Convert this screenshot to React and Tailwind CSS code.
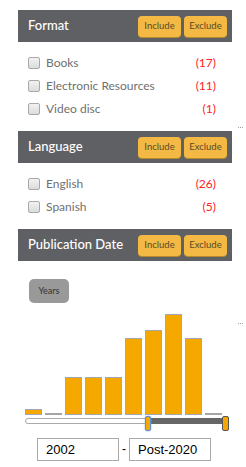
import { useState } from 'react';

const FONT = { fontFamily: 'Lato, "Open Sans", sans-serif' };

const FORMATS = [
  { label: 'Books', count: 17 },
  { label: 'Electronic Resources', count: 11 },
  { label: 'Video disc', count: 1 },
];

const LANGUAGES = [
  { label: 'English', count: 26 },
  { label: 'Spanish', count: 5 },
];

// bar heights in px, one per year bucket
const BARS = [6, 1, 38, 38, 38, 77, 85, 101, 77, 1];

const Dots = () => (
  <div className="flex gap-[1px] pl-[6px]">
    <span className="w-[1px] h-[1px] bg-gray-400" />
    <span className="w-[1px] h-[1px] bg-gray-400" />
    <span className="w-[1px] h-[1px] bg-gray-400" />
  </div>
);

const FacetHeader = ({ title }) => (
  <div className="h-8 bg-[#5f6064] flex items-center justify-between pl-[10px] pr-[5px]">
    <h3 className="text-white text-[13px] font-medium">{title}</h3>
    <div className="flex gap-[3px]">
      {['Include', 'Exclude'].map(b => (
        <button key={b}
          className="h-[21px] w-[43px] rounded-[4px] bg-[#f3b944] text-[9.5px] text-[#5a4a26] shadow-[0_1px_0_#b48a2c]">
          {b}
        </button>
      ))}
    </div>
  </div>
);

const FacetList = ({ items }) => (
  <ul className="pt-[9px] pb-[11px] pl-[10px] pr-4">
    {items.map(it => (
      <li key={it.label} className="h-[23px] flex items-center">
        <span className="w-3 h-3 rounded-[2px] border border-[#a9a9a9] bg-gradient-to-b from-[#f2f2f2] to-[#dcdcdc] shrink-0" />
        <span className="ml-[6px] text-[12px] text-[#707070]">{it.label}</span>
        <span className="ml-auto text-[12px] text-[#f22]">({it.count})</span>
      </li>
    ))}
  </ul>
);

export default function App() {
  const [from, setFrom] = useState('2002');
  const [to, setTo] = useState('Post-2020');

  return (
    <div className="bg-white w-[246px] h-[467px] pt-[10px] pl-[18px]" style={FONT}>
      {/* Format */}
      <div className="flex items-end">
        <div className="w-[214px]">
          <FacetHeader title="Format" />
          <FacetList items={FORMATS} />
        </div>
        <div className="pb-[3px]"><Dots /></div>
      </div>

      {/* Language */}
      <div className="w-[214px]">
        <FacetHeader title="Language" />
        <FacetList items={LANGUAGES} />
      </div>

      {/* Publication Date */}
      <div className="flex items-start">
        <div className="w-[214px]">
          <FacetHeader title="Publication Date" />
          <div className="pt-[15px] pl-[11px]">
            <button className="w-10 h-6 rounded-[5px] bg-[#999] text-[9px] text-[#333]">Years</button>
          </div>

          <div className="mt-[11px] pl-[7px] h-[101px] flex items-end gap-[3px]">
            {BARS.map((h, i) => (
              <div key={i}
                className={`w-[17px] ${h > 2 ? 'bg-[#f5a900] border border-[#a3a6b4]' : 'bg-[#a6a6a6]'}`}
                style={{ height: Math.max(h, 2) }} />
            ))}
          </div>

          {/* range slider */}
          <div className="relative ml-[7px] mt-[3px] w-[202px] h-[6px] rounded-[3px] border border-[#aaa] bg-white">
            <div className="absolute top-[-1px] bottom-[-1px] left-[120px] right-[2px] bg-[#666]" />
            <div className="absolute top-[-3px] left-[119px] w-[6px] h-[15px] rounded-[2px] bg-[#f5a900] border border-[#5b8fd8] shadow-[0_0_2px_#7aaaf0]" />
            <div className="absolute top-[-3px] left-[196px] w-[7px] h-[15px] rounded-[2px] bg-[#f5a900] border border-[#555]" />
          </div>

          <div className="mt-[14px] pl-[19px] flex items-center" style={{ fontFamily: '"Liberation Sans", Arial, sans-serif' }}>
            <input value={from} onChange={e => setFrom(e.target.value)}
              className="w-[82px] h-[23px] border border-[#aaa] px-2 text-[13px] text-black outline-none" />
            <span className="w-[10px] text-center text-[12px] text-black">-</span>
            <input value={to} onChange={e => setTo(e.target.value)}
              className="w-[82px] h-[23px] border border-[#aaa] px-2 text-[13px] text-black outline-none" />
          </div>
        </div>
        <div className="pt-[94px]"><Dots /></div>
      </div>
    </div>
  );
}
